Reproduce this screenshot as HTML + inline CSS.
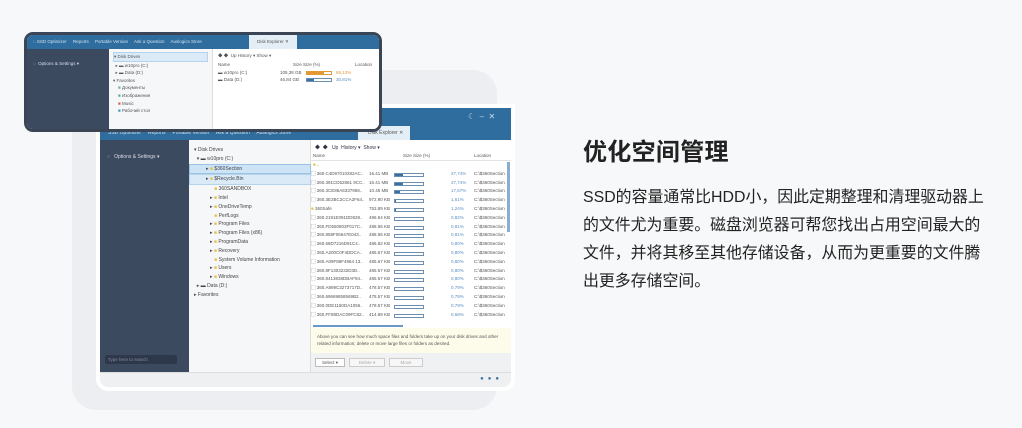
<!DOCTYPE html>
<html><head><meta charset="utf-8"><style>
*{margin:0;padding:0;box-sizing:border-box}
body{width:1022px;height:428px;background:#f7f8f9;font-family:"Liberation Sans","Noto Sans CJK SC",sans-serif;position:relative;overflow:hidden}
.abs{position:absolute}
.shape{left:72px;top:70px;width:425px;height:340px;background:#eceef1;border-radius:24px}
.win{left:100px;top:108px;width:411px;height:279px;background:#fff;border-radius:0 0 8px 8px;box-shadow:0 0 0 4px #fff;overflow:hidden}
.tb{left:0;top:0;width:411px;height:32px;background:#2f6d9e}
.side{left:0;top:32px;width:89px;height:232px;background:#3b4a5e}
.tree{left:89px;top:32px;width:122px;height:232px;background:#f6f7f9;border-right:1px solid #ddd;font-size:5px;color:#444}
.list{left:211px;top:32px;width:200px;height:232px;background:#fff;font-size:4.5px;color:#555}
.status{left:0;top:264px;width:411px;height:15px;background:#eef0f2;border-top:1px solid #ddd}
.row{position:absolute;left:0;height:8.8px;width:200px}
.bar{position:absolute;left:83px;top:2px;width:30px;height:4px;border:1px solid #6a8fb0;background:#fff}
.bar i{display:block;height:100%;background:#3a6fa0}
.small{left:24px;top:32px;width:358px;height:100px;background:#fff;border:3px solid #3a4556;border-radius:9px;overflow:hidden}
h1{position:absolute;left:583px;top:132px;font-size:24px;font-weight:bold;color:#222;letter-spacing:0.3px}
p{position:absolute;left:583px;top:184px;font-size:15.9px;line-height:28px;color:#222;white-space:nowrap}
</style></head><body>
<div class="abs shape"></div>
<div class="abs win">
 <div class="abs tb"></div>
 <div class="abs" style="left:0;top:18px;width:300px;height:14px;font-size:5px;color:#cfe0ee;line-height:14px;padding-left:8px;white-space:nowrap">SSD Optimizer &nbsp;&nbsp;&nbsp; Reports &nbsp;&nbsp;&nbsp; Portable Version &nbsp;&nbsp;&nbsp; Ask a Question &nbsp;&nbsp;&nbsp; Auslogics Store</div>
 <div class="abs" style="left:258px;top:18px;width:52px;height:14px;background:#e4eef6;font-size:5px;color:#555;line-height:14px;padding-left:10px">Disk Explorer ✕</div>
 <div class="abs" style="left:368px;top:4px;font-size:8px;color:#cde">☾ &nbsp;– &nbsp;✕</div>
 <div class="abs side"><div style="position:absolute;left:7px;top:14px;font-size:5px;color:#dde">◌ &nbsp;&nbsp;Options &amp; Settings ▾</div>
  <div style="position:absolute;left:5px;top:215px;width:72px;height:9px;background:#2d394a;border-radius:2px;font-size:4.5px;color:#889;padding:2px 3px">Type here to search</div></div>
 <div class="abs tree">
  <div style="position:absolute;left:5px;top:6px;line-height:8.8px;width:117px">▾ Disk Drives<br>&nbsp;&nbsp;▾ ▬ w10pro (C:)
  <div style="background:#cde3f6;border:1px solid #9cc3e6;margin-left:-5px;padding-left:16px">▸ <span style="color:#e8c24a">■</span> $360Section</div>
  <div style="background:#dbeaf7;border:1px solid #b6d3ee;margin-left:-5px;padding-left:16px">▸ <span style="color:#e8c24a">■</span> $Recycle.Bin</div>
  <div style="padding-left:16px">&nbsp;&nbsp; <span style="color:#e8c24a">■</span> 360SANDBOX<br>▸ <span style="color:#e8c24a">■</span> Intel<br>▸ <span style="color:#e8c24a">■</span> OneDriveTemp<br>&nbsp;&nbsp; <span style="color:#e8c24a">■</span> PerfLogs<br>▸ <span style="color:#e8c24a">■</span> Program Files<br>▸ <span style="color:#e8c24a">■</span> Program Files (x86)<br>▸ <span style="color:#e8c24a">■</span> ProgramData<br>▸ <span style="color:#e8c24a">■</span> Recovery<br>&nbsp;&nbsp; <span style="color:#e8c24a">■</span> System Volume Information<br>▸ <span style="color:#e8c24a">■</span> Users<br>▸ <span style="color:#e8c24a">■</span> Windows</div>
  &nbsp;&nbsp;▸ ▬ Data (D:)<br>▸ Favorites</div>
 </div>
 <div class="abs list">
  <div style="position:absolute;left:4px;top:4px;font-size:5px;color:#334">◆ &nbsp;◆ &nbsp; Up &nbsp;History ▾ &nbsp;Show ▾</div>
  <div style="position:absolute;left:0;top:12px;width:200px;height:9px;border-bottom:1px solid #e3e3e3;padding:1px 2px">Name<span style="position:absolute;left:92px">Size Size (%)</span><span style="position:absolute;left:163px">Location</span></div>
  <div style="position:absolute;left:0;top:22px;width:196px;height:196px">
   <div class="row" style="top:0"><span style="color:#e8c24a;margin-left:2px">■</span> ..</div>
   <div class="row" style="top:8.8px">▢ 360.C4D97010282AC..<span style="position:absolute;left:58px">16.41 MB</span><div class="bar"><i style="width:28%"></i></div><span style="position:absolute;left:140px;color:#5a8cc0">27,74%</span><span style="position:absolute;left:163px">C:\$360Section</span></div>
   <div class="row" style="top:17.6px">▢ 360.391CD52861 9CC..<span style="position:absolute;left:58px">16.41 MB</span><div class="bar"><i style="width:28%"></i></div><span style="position:absolute;left:140px;color:#5a8cc0">27,74%</span><span style="position:absolute;left:163px">C:\$360Section</span></div>
   <div class="row" style="top:26.4px">▢ 360.3CE86A6337958..<span style="position:absolute;left:58px">10.45 MB</span><div class="bar"><i style="width:18%"></i></div><span style="position:absolute;left:140px;color:#5a8cc0">17,67%</span><span style="position:absolute;left:163px">C:\$360Section</span></div>
   <div class="row" style="top:35.2px">▢ 360.3E2BC2CCA2F64..<span style="position:absolute;left:58px">972.90 KB</span><div class="bar"><i style="width:2%"></i></div><span style="position:absolute;left:140px;color:#5a8cc0">1,61%</span><span style="position:absolute;left:163px">C:\$360Section</span></div>
   <div class="row" style="top:44px"><span style="color:#e8c24a">■</span> 360Safe<span style="position:absolute;left:58px">753.89 KB</span><div class="bar"><i style="width:1%"></i></div><span style="position:absolute;left:140px;color:#5a8cc0">1,24%</span><span style="position:absolute;left:163px">C:\$360Section</span></div>
   <div class="row" style="top:52.8px">▢ 360.2191E091DD828..<span style="position:absolute;left:58px">496.64 KB</span><div class="bar"></div><span style="position:absolute;left:140px;color:#5a8cc0">0,82%</span><span style="position:absolute;left:163px">C:\$360Section</span></div>
   <div class="row" style="top:61.6px">▢ 360.FD550803F017C..<span style="position:absolute;left:58px">488.56 KB</span><div class="bar"></div><span style="position:absolute;left:140px;color:#5a8cc0">0,81%</span><span style="position:absolute;left:163px">C:\$360Section</span></div>
   <div class="row" style="top:70.4px">▢ 360.858F06647E043..<span style="position:absolute;left:58px">488.56 KB</span><div class="bar"></div><span style="position:absolute;left:140px;color:#5a8cc0">0,81%</span><span style="position:absolute;left:163px">C:\$360Section</span></div>
   <div class="row" style="top:79.2px">▢ 360.68D7216D91C4..<span style="position:absolute;left:58px">486.82 KB</span><div class="bar"></div><span style="position:absolute;left:140px;color:#5a8cc0">0,80%</span><span style="position:absolute;left:163px">C:\$360Section</span></div>
   <div class="row" style="top:88px">▢ 360.A200C0F4DDCA..<span style="position:absolute;left:58px">485.67 KB</span><div class="bar"></div><span style="position:absolute;left:140px;color:#5a8cc0">0,80%</span><span style="position:absolute;left:163px">C:\$360Section</span></div>
   <div class="row" style="top:96.8px">▢ 360.A09F89F4964 13..<span style="position:absolute;left:58px">485.67 KB</span><div class="bar"></div><span style="position:absolute;left:140px;color:#5a8cc0">0,80%</span><span style="position:absolute;left:163px">C:\$360Section</span></div>
   <div class="row" style="top:105.6px">▢ 360.8F1303232D3D..<span style="position:absolute;left:58px">485.67 KB</span><div class="bar"></div><span style="position:absolute;left:140px;color:#5a8cc0">0,80%</span><span style="position:absolute;left:163px">C:\$360Section</span></div>
   <div class="row" style="top:114.4px">▢ 360.8413838DBAF94..<span style="position:absolute;left:58px">485.67 KB</span><div class="bar"></div><span style="position:absolute;left:140px;color:#5a8cc0">0,80%</span><span style="position:absolute;left:163px">C:\$360Section</span></div>
   <div class="row" style="top:123.2px">▢ 360.A899C3273717D..<span style="position:absolute;left:58px">478.57 KB</span><div class="bar"></div><span style="position:absolute;left:140px;color:#5a8cc0">0,79%</span><span style="position:absolute;left:163px">C:\$360Section</span></div>
   <div class="row" style="top:132px">▢ 360.69669858569B2..<span style="position:absolute;left:58px">478.57 KB</span><div class="bar"></div><span style="position:absolute;left:140px;color:#5a8cc0">0,79%</span><span style="position:absolute;left:163px">C:\$360Section</span></div>
   <div class="row" style="top:140.8px">▢ 360.0DE1150DA1056..<span style="position:absolute;left:58px">478.57 KB</span><div class="bar"></div><span style="position:absolute;left:140px;color:#5a8cc0">0,79%</span><span style="position:absolute;left:163px">C:\$360Section</span></div>
   <div class="row" style="top:149.6px">▢ 360.FF88DAC09FC82..<span style="position:absolute;left:58px">414.89 KB</span><div class="bar"></div><span style="position:absolute;left:140px;color:#5a8cc0">0,68%</span><span style="position:absolute;left:163px">C:\$360Section</span></div>
  </div>
  <div style="position:absolute;left:196px;top:22px;width:3px;height:70px;background:#8aaed0"></div>
  <div style="position:absolute;left:2px;top:185px;width:90px;height:2px;background:#6a98c8"></div>
  <div style="position:absolute;left:0;top:188px;width:200px;height:25px;background:#fdfbea;padding:5px 6px;font-size:4.5px;line-height:7px;color:#555">Above you can see how much space files and folders take up on your disk drives and other related information; delete or move large files or folders as desired.</div>
  <div style="position:absolute;left:0;top:213px;width:200px;height:19px;background:#f0f1f3">
   <div style="position:absolute;left:4px;top:5px;width:30px;height:9px;border:1px solid #bbb;background:#fff;font-size:4.5px;text-align:center;line-height:7px">Select ▾</div>
   <div style="position:absolute;left:38px;top:5px;width:36px;height:9px;border:1px solid #ccc;background:#f7f7f7;font-size:4.5px;color:#aaa;text-align:center;line-height:7px">Delete ▾</div>
   <div style="position:absolute;left:78px;top:5px;width:34px;height:9px;border:1px solid #ccc;background:#f7f7f7;font-size:4.5px;color:#aaa;text-align:center;line-height:7px">Move</div>
  </div>
 </div>
 <div class="abs status"><div style="position:absolute;right:8px;top:3px;font-size:6px;color:#3a6fa0;letter-spacing:4px">●●●</div></div>
</div>
<div class="abs small">
 <div style="position:absolute;left:0;top:0;width:352px;height:14px;background:#2f6d9e;font-size:4.5px;color:#d0e0ee;line-height:14px;padding-left:6px;white-space:nowrap">◌ SSD Optimizer &nbsp;&nbsp;&nbsp; Reports &nbsp;&nbsp;&nbsp; Portable Version &nbsp;&nbsp;&nbsp; Ask a Question &nbsp;&nbsp;&nbsp; Auslogics Store</div>
 <div style="position:absolute;left:222px;top:0;width:48px;height:14px;background:#e4eef6;font-size:4.5px;color:#555;line-height:14px;padding-left:8px">Disk Explorer ✕</div>
 <div style="position:absolute;left:0;top:14px;width:82px;height:86px;background:#3b4a5e;font-size:4.5px;color:#dde;padding:12px 6px">◌ &nbsp;Options &amp; Settings ▾</div>
 <div style="position:absolute;left:82px;top:14px;width:104px;height:86px;background:#f6f7f9;border-right:1px solid #ddd;font-size:4.5px;color:#555;line-height:7.6px;padding:3px 4px">
  <div style="background:#dbeaf7;border:1px solid #b6d3ee">▾ Disk Drives</div>&nbsp;&nbsp;▸ ▬ w10pro (C:)<br>&nbsp;&nbsp;▸ ▬ Data (D:)<br>▾ Favorites<br>&nbsp;&nbsp;&nbsp;&nbsp;<span style="color:#7aa">■</span> Документы<br>&nbsp;&nbsp;&nbsp;&nbsp;<span style="color:#5a9">■</span> Изображения<br>&nbsp;&nbsp;&nbsp;&nbsp;<span style="color:#d55">■</span> Music<br>&nbsp;&nbsp;&nbsp;&nbsp;<span style="color:#39c">■</span> Рабочий стол</div>
 <div style="position:absolute;left:187px;top:14px;width:170px;height:86px;background:#fff;font-size:4.5px;color:#555;padding:4px">
  <div>◆ ◆ &nbsp;Up History ▾ Show ▾</div>
  <div style="margin-top:3px;position:relative">Name<span style="position:absolute;left:75px">Size Size (%)</span><span style="position:absolute;left:137px">Location</span></div>
  <div style="margin-top:3px;position:relative">▬ w10pro (C:)<span style="position:absolute;left:62px">105,38 GB</span><span style="position:absolute;left:88px;top:1px;width:26px;height:4px;border:1px solid #e39a35"><i style="display:block;width:70%;height:100%;background:#e39a35"></i></span><span style="position:absolute;left:118px;color:#e39a35">65,13%</span></div>
  <div style="margin-top:2px;position:relative">▬ Data (D:)<span style="position:absolute;left:62px">46,84 GB</span><span style="position:absolute;left:88px;top:1px;width:26px;height:4px;border:1px solid #6a8fb0"><i style="display:block;width:30%;height:100%;background:#3a6fa0"></i></span><span style="position:absolute;left:118px;color:#5a8cc0">30,81%</span></div>
 </div>
</div>
<h1>优化空间管理</h1>
<p>SSD的容量通常比HDD小，因此定期整理和清理驱动器上<br>的文件尤为重要。磁盘浏览器可帮您找出占用空间最大的<br>文件，并将其移至其他存储设备，从而为更重要的文件腾<br>出更多存储空间。</p>
</body></html>
